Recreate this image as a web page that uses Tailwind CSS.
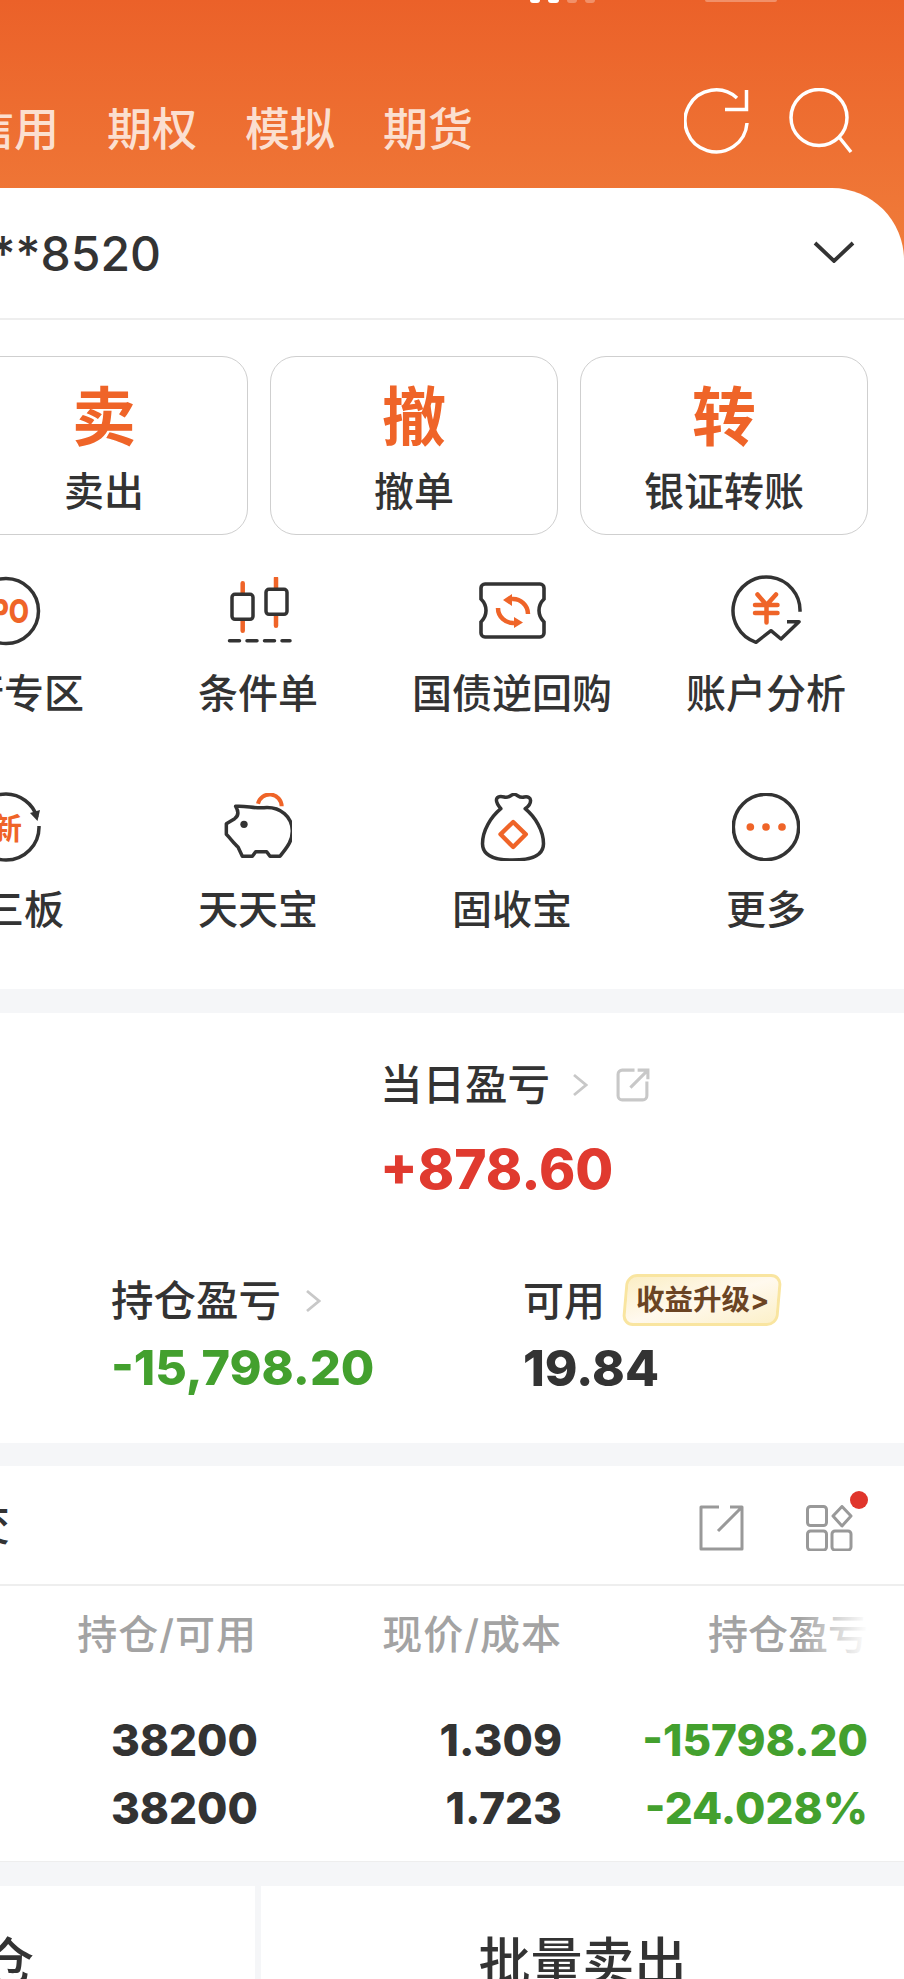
<!doctype html>
<html lang="zh">
<head>
<meta charset="utf-8">
<script src="https://cdn.jsdelivr.net/npm/@tailwindcss/browser@4"></script>
</head>
<body class="m-0 bg-white">
<div class="relative w-[904px] h-[1979px] overflow-hidden bg-[#f5f6f8] text-[#333] font-['Inter','Noto_Sans_CJK_SC',sans-serif]">

  <!-- orange header -->
  <header class="relative h-[258px] bg-gradient-to-b from-[#eb6129] to-[#f07c3a]">
    <div class="flex justify-between items-start h-[4px]">
      <div class="ml-[530px] flex gap-[8px] h-[3px]">
        <span class="w-[10px] h-[3px] rounded-b-full bg-white"></span>
        <span class="w-[11px] h-[3px] rounded-b-full bg-white"></span>
        <span class="w-[10px] h-[3px] rounded-b-full bg-white/30"></span>
        <span class="w-[10px] h-[3px] rounded-b-full bg-white/30"></span>
      </div>
      <span class="mr-[127px] w-[72px] h-[2px] rounded-b-[4px] bg-white/30"></span>
    </div>
    <div class="flex items-center h-[66px] mt-[93px] pr-[51px]">
      <nav class="flex gap-[48px] -ml-[31px] text-[45px] leading-[66px] font-medium text-[#fbdfd0] whitespace-nowrap">
        <span>信用</span><span>期权</span><span>模拟</span><span>期货</span>
      </nav>
      <div class="ml-auto flex gap-[39px] -mt-[18px]">
        <svg width="66" height="66" viewBox="0 0 66 66" fill="none" stroke="#fff" stroke-width="3.5"><path d="M63 35A31 31 0 1 1 53 10"/><path d="M62.5 2V21.5H41"/></svg>
        <svg width="64" height="66" viewBox="0 0 64 66" fill="none" stroke="#fff" stroke-width="3.5"><circle cx="30" cy="29.5" r="28"/><path d="M50 49L62 64"/></svg>
      </div>
    </div>
  </header>

  <!-- account + shortcuts card -->
  <section class="relative -mt-[70px] bg-white rounded-tr-[72px] pb-[57px]">
    <div class="flex items-center justify-between h-[132px] border-b-2 border-[#eeeeee] pr-[49px]">
      <div class="w-[161px] flex justify-end text-[48px] leading-[60px] font-medium whitespace-nowrap mt-[2px]">***8520</div>
      <svg width="42" height="22" viewBox="0 0 42 22" fill="none" stroke="#333" stroke-width="3.8" class="-mt-[2px]"><path d="M2 2L21 20L40 2"/></svg>
    </div>

    <div class="flex gap-[22px] -ml-[40px] mt-[36px]">
      <div class="w-[288px] shrink-0 h-[179px] border-[1.5px] border-[#cfcfcf] rounded-[26px] flex flex-col items-center pt-[22px]">
        <span class="text-[64px] leading-[76px] font-bold text-[#ef6428]">卖</span>
        <span class="text-[40px] leading-[46px] font-medium mt-[14px]">卖出</span>
      </div>
      <div class="w-[288px] shrink-0 h-[179px] border-[1.5px] border-[#cfcfcf] rounded-[26px] flex flex-col items-center pt-[22px]">
        <span class="text-[64px] leading-[76px] font-bold text-[#ef6428]">撤</span>
        <span class="text-[40px] leading-[46px] font-medium mt-[14px]">撤单</span>
      </div>
      <div class="w-[288px] shrink-0 h-[179px] border-[1.5px] border-[#cfcfcf] rounded-[26px] flex flex-col items-center pt-[22px]">
        <span class="text-[64px] leading-[76px] font-bold text-[#ef6428]">转</span>
        <span class="text-[40px] leading-[46px] font-medium mt-[14px]">银证转账</span>
      </div>
    </div>

    <div class="grid grid-cols-4 w-[1016px] -ml-[123px] mt-[42px] gap-y-[77px] text-[40px] leading-[44px] font-medium text-center">
      <div class="flex flex-col items-center">
        <svg width="68" height="68" viewBox="0 0 68 68" fill="none" class="overflow-visible"><circle cx="36" cy="34" r="32.5" stroke="#333" stroke-width="3.5"/><text transform="translate(59 46) scale(.82 1)" text-anchor="end" font-size="32" font-weight="800" fill="#ef6428">IPO</text></svg>
        <span class="mt-[27px] whitespace-nowrap">发行专区</span>
      </div>
      <div class="flex flex-col items-center">
        <svg width="68" height="68" viewBox="0 0 68 68" fill="none"><path d="M18.7 6.3V53.7M52 1.3V48.7" stroke="#ef6428" stroke-width="4.500" stroke-linecap="round"/><rect x="8" y="17.3" width="21" height="25" rx="3" fill="#fff" stroke="#333" stroke-width="3.5"/><rect x="42" y="12.3" width="21" height="25" rx="3" fill="#fff" stroke="#333" stroke-width="3.5"/><path d="M5.5 63.7H66" stroke="#333" stroke-width="3.5" stroke-dasharray="10 7.5" stroke-linecap="round"/></svg>
        <span class="mt-[27px] whitespace-nowrap">条件单</span>
      </div>
      <div class="flex flex-col items-center">
        <svg width="68" height="68" viewBox="0 0 68 68" fill="none"><path d="M7 7H62a4 4 0 0 1 4 4V22q-5 5-5 11.5q0 6.5 5 11.5V56a4 4 0 0 1-4 4H7a4 4 0 0 1-4-4V45q5-5 5-11.5q0-6.5-5-11.5V11a4 4 0 0 1 4-4Z" stroke="#333" stroke-width="3.6"/><path d="M50 37A15 15 0 0 0 34 22M20 31A15 15 0 0 0 36 46" stroke="#ef6428" stroke-width="4.500"/><path d="M34 17L25 23L34 29ZM36 40L45 45.500L36 51Z" fill="#ef6428"/></svg>
        <span class="mt-[27px] whitespace-nowrap">国债逆回购</span>
      </div>
      <div class="flex flex-col items-center">
        <svg width="68" height="68" viewBox="0 0 68 68" fill="none" class="overflow-visible"><path d="M68 34.700A33.500 33.500 0 1 0 24 65.300L39 53.700L49 62L67 44.700H55" stroke="#333" stroke-width="3.5" stroke-linejoin="round"/><path d="M25.500 17.500L34.500 28L44 17.500M34.500 28V45.500M23 28H45.500M23 36H45.500" stroke="#ef6428" stroke-width="4.500" stroke-linecap="round"/></svg>
        <span class="mt-[27px] whitespace-nowrap">账户分析</span>
      </div>
      <div class="flex flex-col items-center">
        <svg width="68" height="68" viewBox="0 0 68 68" fill="none" class="overflow-visible"><path d="M67 24A33 33 0 0 0 36 1A33 33 0 0 0 3 34A33 33 0 0 0 36 67A33 33 0 0 0 69 33" stroke="#333" stroke-width="3.5"/><path d="M70 17L60 20L67.500 28Z" fill="#333"/><text x="52" y="46" text-anchor="end" font-size="30" font-weight="700" fill="#ef6428">新</text></svg>
        <span class="mt-[27px] whitespace-nowrap">新三板</span>
      </div>
      <div class="flex flex-col items-center">
        <svg width="68" height="68" viewBox="670 698 204 204" fill="none"><path d="M705 738C735 735 760 745 790 742C840 738 875 770 875 812C875 845 855 865 838 888H808L798 874H765L755 888H725L712 860C700 850 690 835 677 822L677 790L702 775C712 768 715 755 705 738Z" stroke="#333" stroke-width="10.500" stroke-linejoin="round"/><circle cx="730" cy="792" r="11" fill="#333"/><path d="M772 730A36 36 0 0 1 843 738" stroke="#ef6428" stroke-width="12"/></svg>
        <span class="mt-[27px] whitespace-nowrap">天天宝</span>
      </div>
      <div class="flex flex-col items-center">
        <svg width="68" height="68" viewBox="76.500 698 204 204" fill="none"><path d="M145 745C120 715 135 705 155 710C170 715 175 702 185 702C195 702 200 715 215 710C240 705 240 730 218 745C248 770 273 810 273 850C273 888 230 899 180 899C130 899 90 888 90 850C90 810 115 770 145 745Z" stroke="#333" stroke-width="10.500" stroke-linejoin="round"/><path d="M182 785L220 822L182 860L144 822Z" stroke="#ef6428" stroke-width="13" stroke-linejoin="round"/></svg>
        <span class="mt-[27px] whitespace-nowrap">固收宝</span>
      </div>
      <div class="flex flex-col items-center">
        <svg width="68" height="68" viewBox="838 698 204 204" fill="none"><circle cx="940" cy="800" r="98" stroke="#333" stroke-width="10.500"/><circle cx="893" cy="800" r="11.500" fill="#ef6428"/><circle cx="940" cy="800" r="11.500" fill="#ef6428"/><circle cx="988" cy="800" r="11.500" fill="#ef6428"/></svg>
        <span class="mt-[27px] whitespace-nowrap">更多</span>
      </div>
    </div>
  </section>

  <!-- profit summary -->
  <section class="mt-[24px] bg-white h-[430px] pt-[47px]">
    <div class="ml-[380px]">
      <div class="flex items-center h-[50px]">
        <span class="text-[42.500px] leading-[50px] font-medium">当日盈亏</span>
        <svg width="16" height="24" viewBox="0 0 16 24" fill="none" stroke="#c8c8c8" stroke-width="2.800" class="ml-[22px]"><path d="M2 2L14 12L2 22"/></svg>
        <svg width="35" height="36" viewBox="0 0 34 35" fill="none" stroke="#c8c8c8" stroke-width="3" class="ml-[28px]"><path d="M18 3H6a4 4 0 0 0-4 4V28a4 4 0 0 0 4 4H26a4 4 0 0 0 4-4V14M14 20L31 3M21 3H31V12"/></svg>
      </div>
      <div class="mt-[29px] text-[55px] leading-[60px] font-extrabold text-[#e03a2f]">+878.60</div>
    </div>
    <div class="flex mt-[77px]">
      <div class="ml-[111px] w-[412px]">
        <div class="flex items-center h-[50px]">
          <span class="text-[42.500px] leading-[50px] font-medium">持仓盈亏</span>
          <svg width="16" height="24" viewBox="0 0 16 24" fill="none" stroke="#c8c8c8" stroke-width="2.800" class="ml-[24px]"><path d="M2 2L14 12L2 22"/></svg>
        </div>
        <div class="mt-[12px] text-[48.500px] leading-[60px] font-extrabold text-[#43a02e]">-15,798.20</div>
      </div>
      <div>
        <div class="flex items-center h-[50px]">
          <span class="text-[41px] leading-[50px] font-medium">可用</span>
          <span class="relative ml-[19px] -mt-[2px] flex items-center h-[52px] w-[156px] pl-[12px] text-[28.500px] font-bold text-[#6b4423] whitespace-nowrap">
            <span class="absolute inset-0 -skew-x-[5deg] border-[3px] border-[#f9e5a0] rounded-[11px] bg-gradient-to-br from-[#fbeec4] via-[#fff9ee] to-[#fcf0c8]"></span>
            <span class="relative">收益升级&gt;</span>
          </span>
        </div>
        <div class="mt-[12px] text-[49.500px] leading-[60px] font-extrabold">19.84</div>
      </div>
    </div>
  </section>

  <!-- holdings -->
  <section class="relative mt-[23px] bg-white h-[396px] border-b border-[#eeeeee]">
    <div class="flex items-center justify-between h-[120px] border-b-2 border-[#eeeeee] pr-[51px]">
      <span class="-ml-[34px] text-[44px] font-medium">交</span>
      <div class="flex items-center gap-[62px] mt-[6px]">
        <svg width="45" height="46" viewBox="0 0 45 46" fill="none" stroke="#999" stroke-width="3" stroke-linejoin="round"><path d="M20 2H2V44H43V2H31M43 2L19 26"/></svg>
        <div class="relative">
          <svg width="47" height="46" viewBox="0 0 47 46" fill="none" stroke="#999" stroke-width="3"><rect x="1.500" y="1.500" width="19" height="19" rx="3"/><rect x="1.500" y="26" width="19" height="19" rx="3"/><rect x="26" y="26" width="19" height="19" rx="3"/><path d="M36 1.500L45 11L36 21L27 11Z" stroke-linejoin="round"/></svg>
          <span class="absolute -top-[14px] -right-[15px] w-[18px] h-[18px] rounded-full bg-[#e0352b]"></span>
        </div>
      </div>
    </div>
    <div class="flex pt-[24px] text-[40px] leading-[50px] font-medium text-[#a3a3a3] text-right">
      <span class="w-[257px] tracking-[1px]">持仓/可用</span><span class="w-[305px] tracking-[1px]">现价/成本</span><span class="w-[306px] whitespace-nowrap">持仓盈亏</span>
    </div>
    <span class="absolute left-[800px] top-[140px] w-[68px] h-[50px] bg-gradient-to-r from-white/0 to-white"></span>
    <div class="mt-[46px] text-[44px] leading-[68px] font-extrabold text-right">
      <div class="flex"><span class="w-[258px]">38200</span><span class="w-[304px]">1.309</span><span class="w-[306px] text-[#43a02e]">-15798.20</span></div>
      <div class="flex"><span class="w-[258px]">38200</span><span class="w-[304px]">1.723</span><span class="w-[306px] text-[#43a02e]">-24.028%</span></div>
    </div>
  </section>

  <!-- bottom actions -->
  <section class="mt-[24px] flex gap-[7px] h-[100px] text-[52px] leading-[60px] font-medium">
    <div class="w-[255px] bg-white pt-[47px] pr-[221px] flex justify-end whitespace-nowrap">清仓</div>
    <div class="flex-1 bg-white pt-[47px] text-center -ml-[1px]">批量卖出</div>
  </section>
</div>
</body>
</html>
